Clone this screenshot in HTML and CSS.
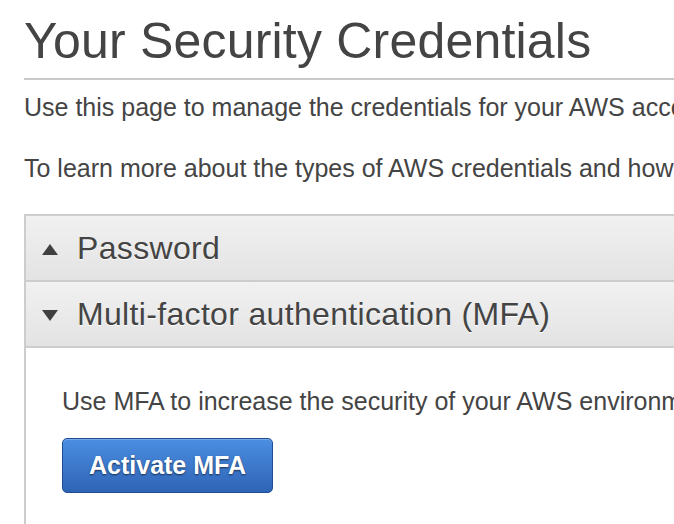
FILE: index.html
```html
<!DOCTYPE html>
<html>
<head>
<meta charset="utf-8">
<link rel="stylesheet" href="styles.css">
</head>
<body>
<div class="page">
  <h1 class="title">Your Security Credentials</h1>
  <hr class="rule">
  <p class="intro">Use this page to manage the credentials for your AWS account. To learn more about IAM users, see the documentation.</p>
  <p class="intro second">To learn more about the types of AWS credentials and how they're used, see AWS Security Credentials.</p>
  <div class="panel">
    <div class="section-head">
      <svg class="arrow" width="16" height="11" viewBox="0 0 16 11"><polygon points="8,0 16,11 0,11" fill="#404040"/></svg>
      <span class="head-text">Password</span>
    </div>
    <div class="section-head">
      <svg class="arrow" width="16" height="11" viewBox="0 0 16 11"><polygon points="0,0 16,0 8,11" fill="#404040"/></svg>
      <span class="head-text">Multi-factor authentication (MFA)</span>
    </div>
    <div class="section-body">
      <p class="body-text">Use MFA to increase the security of your AWS environment. Signing in to MFA-protected accounts requires a user name, password, and an authentication code.</p>
      <button class="btn-primary">Activate MFA</button>
    </div>
  </div>
</div>
</body>
</html>
```

FILE: styles.css
```css
html, body {
  margin: 0;
  padding: 0;
  background: #fff;
  overflow: hidden;
}
.page {
  width: 1000px;
  padding-left: 24px;
  font-family: "Liberation Sans", Arial, sans-serif;
  color: #444;
}
.title {
  margin: 0;
  padding-top: 11px;
  font-size: 50px;
  line-height: 60px;
  font-weight: normal;
  letter-spacing: 0.2px;
  color: #444;
  white-space: nowrap;
}
.rule {
  margin: 7px 0 0 0;
  border: 0;
  height: 2px;
  background: #c9c9c9;
}
.intro {
  margin: 12px 0 0 0;
  font-size: 25px;
  line-height: 30px;
  white-space: nowrap;
}
.intro.second {
  margin-top: 31px;
}
.panel {
  margin-top: 31px;
  border-left: 2px solid #cdcdcd;
  border-top: 2px solid #cdcdcd;
  height: 400px;
}
.section-head {
  display: flex;
  align-items: center;
  height: 64px;
  padding-left: 16px;
  background: linear-gradient(#f1f1f1, #e3e3e3);
  border-bottom: 2px solid #cdcdcd;
}
.arrow {
  display: block;
  margin-right: 19px;
  margin-top: 3px;
}
.head-text {
  font-size: 32px;
  line-height: 64px;
  letter-spacing: 0.33px;
  color: #444;
  text-shadow: 0 1px 0 #fff;
  white-space: nowrap;
}
.section-body {
  padding: 38px 0 0 36px;
}
.body-text {
  margin: 0;
  font-size: 25px;
  line-height: 30px;
  white-space: nowrap;
}
.btn-primary {
  display: block;
  margin-top: 22px;
  width: 211px;
  height: 55px;
  box-sizing: border-box;
  border: 1px solid #1f4d94;
  border-radius: 5px;
  background: linear-gradient(#4b8ee2, #2f64b6);
  box-shadow: inset 0 1px 0 rgba(255,255,255,0.25);
  color: #fff;
  font-family: "Liberation Sans", Arial, sans-serif;
  font-weight: bold;
  font-size: 25px;
  text-shadow: 0 1px 2px rgba(0,0,0,0.6);
  padding: 0;
  cursor: pointer;
}
```
